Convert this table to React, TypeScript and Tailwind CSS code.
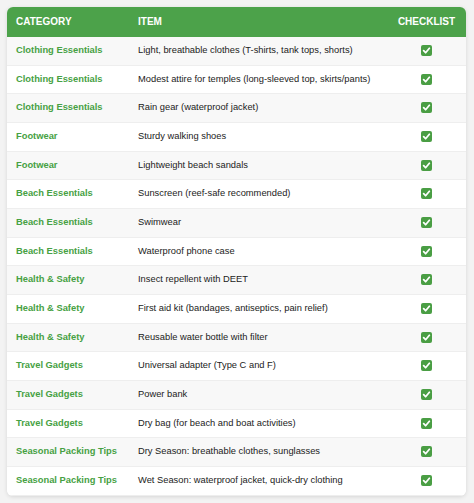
const rows: [string, string][] = [
  ['Clothing Essentials', 'Light, breathable clothes (T-shirts, tank tops, shorts)'],
  ['Clothing Essentials', 'Modest attire for temples (long-sleeved top, skirts/pants)'],
  ['Clothing Essentials', 'Rain gear (waterproof jacket)'],
  ['Footwear', 'Sturdy walking shoes'],
  ['Footwear', 'Lightweight beach sandals'],
  ['Beach Essentials', 'Sunscreen (reef-safe recommended)'],
  ['Beach Essentials', 'Swimwear'],
  ['Beach Essentials', 'Waterproof phone case'],
  ['Health & Safety', 'Insect repellent with DEET'],
  ['Health & Safety', 'First aid kit (bandages, antiseptics, pain relief)'],
  ['Health & Safety', 'Reusable water bottle with filter'],
  ['Travel Gadgets', 'Universal adapter (Type C and F)'],
  ['Travel Gadgets', 'Power bank'],
  ['Travel Gadgets', 'Dry bag (for beach and boat activities)'],
  ['Seasonal Packing Tips', 'Dry Season: breathable clothes, sunglasses'],
  ['Seasonal Packing Tips', 'Wet Season: waterproof jacket, quick-dry clothing'],
]

function CheckBox() {
  return (
    <svg width="11" height="11" viewBox="0 0 10 10" className="inline-block align-middle">
      <rect x="0" y="0" width="10" height="10" rx="1.8" fill="#4a9e44" />
      <path d="M2.4 5.2 L4.2 7 L7.6 3" fill="none" stroke="#fff" strokeWidth="1.6" strokeLinecap="round" strokeLinejoin="round" />
    </svg>
  )
}

export default function App() {
  return (
    <div className="min-h-[503px] w-[474px] bg-[#f3f3f3] pt-[7px] pl-[7px] pr-[8px] font-['Liberation_Sans',Arial,sans-serif]">
      <div className="overflow-hidden rounded-[6px] bg-white shadow-[0_1px_4px_rgba(0,0,0,0.12)]">
        <table className="w-full table-fixed border-collapse">
          <colgroup>
            <col className="w-[121px]" />
            <col className="w-[259px]" />
            <col />
          </colgroup>
          <thead>
            <tr className="bg-[#4ca24a] text-[10px] font-bold uppercase text-white">
              <th className="px-[9px] py-2 text-left leading-[14px]">Category</th>
              <th className="px-[10px] py-2 text-left leading-[14px]">Item</th>
              <th className="px-[10px] py-2 text-center leading-[14px]">Checklist</th>
            </tr>
          </thead>
          <tbody>
            {rows.map(([cat, item], i) => (
              <tr
                key={i}
                className={`border-b border-[#eeeeee] text-[9.33px] leading-[11.67px] ${i % 2 === 0 ? 'bg-[#f8f8f8]' : 'bg-white'}`}
              >
                <td className="px-[9px] py-2 font-bold text-[#46a143]">{cat}</td>
                <td className="px-[10px] py-2 text-[#222222]">{item}</td>
                <td className="px-[10px] py-2 text-center">
                  <CheckBox />
                </td>
              </tr>
            ))}
          </tbody>
        </table>
      </div>
    </div>
  )
}
